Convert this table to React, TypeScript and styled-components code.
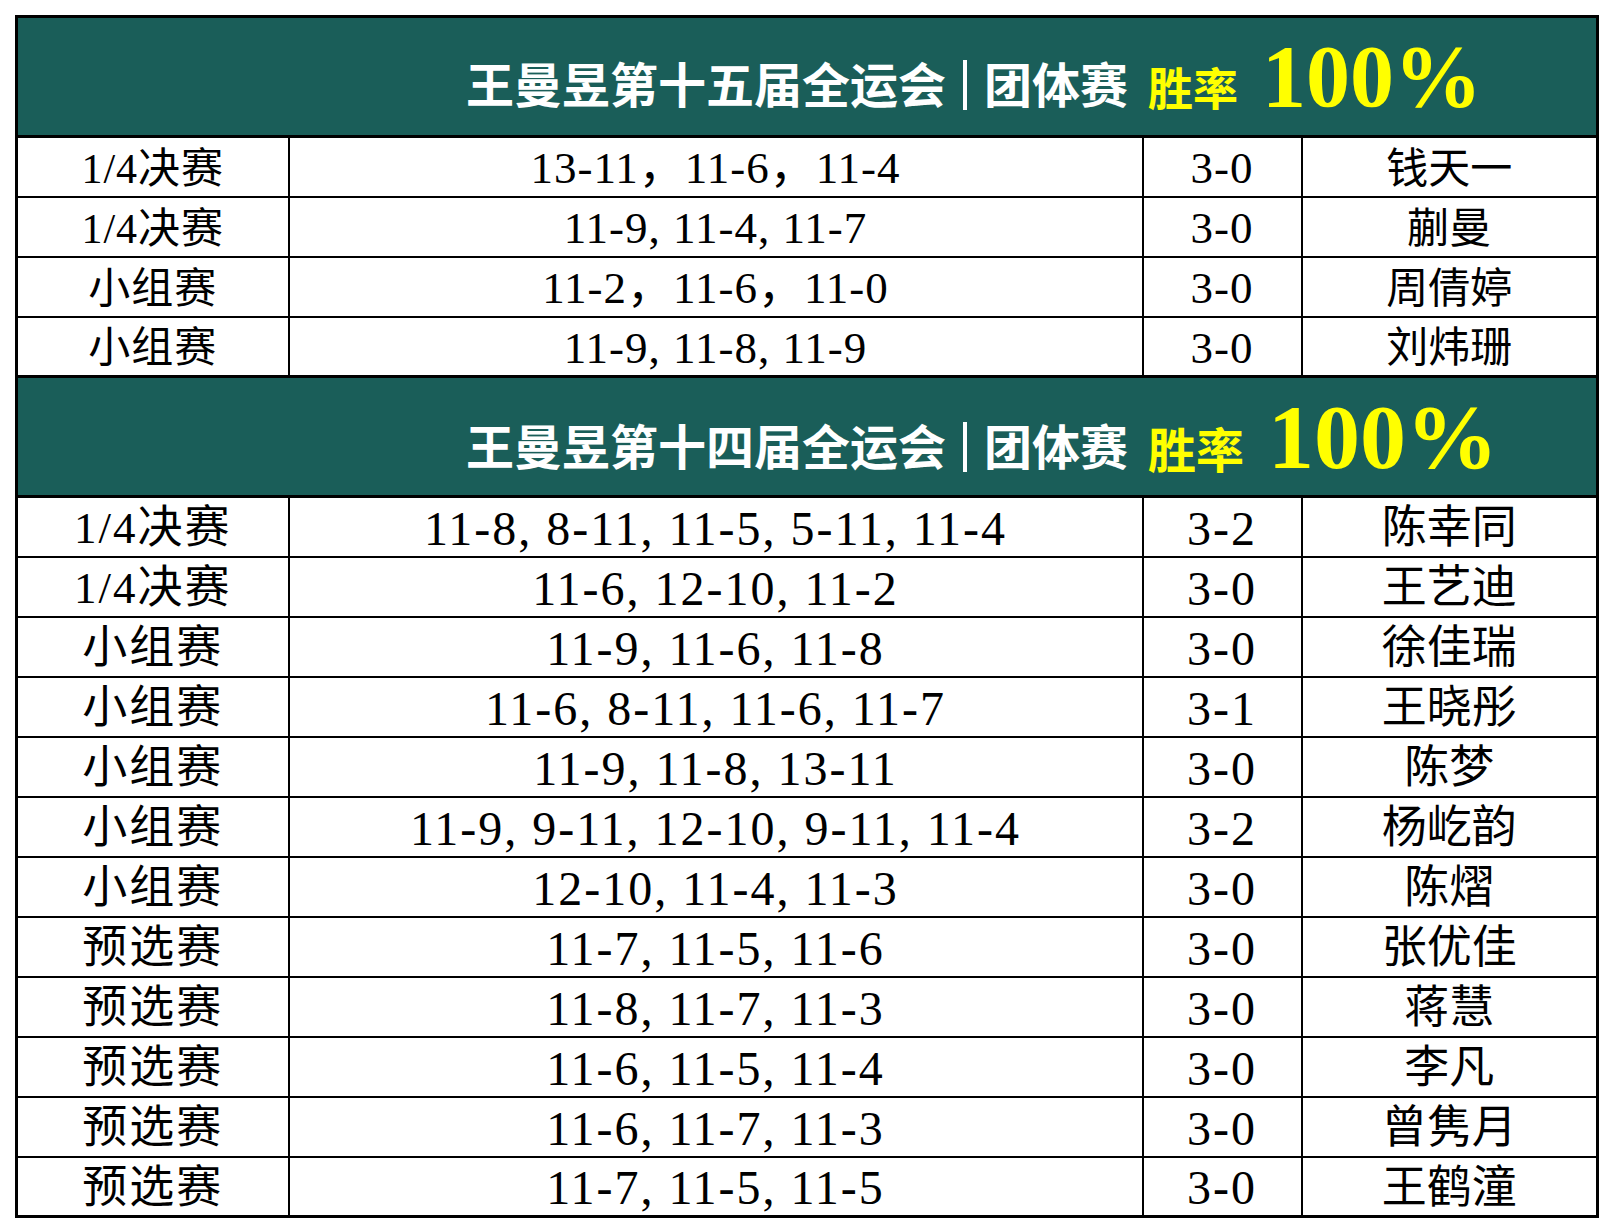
import React from "react";
import styled, { createGlobalStyle } from "styled-components";

const GlobalStyle = createGlobalStyle`
  html, body { margin: 0; padding: 0; background: #ffffff; }
  body { padding: 15px 0 0 15px; }
`;

const Table = styled.table`
  border-collapse: collapse;
  table-layout: fixed;
  width: 1581px;
  border: 3px solid #000;
  font-family: "Liberation Serif", "Noto Sans CJK SC", serif;
  color: #000;
`;

const HeaderRow = styled.tr`
  height: 120px;
`;

const HeaderCell = styled.td`
  background: #1a5e59;
  border: 3px solid #000;
  padding: 0;
`;

const HeaderLine = styled.div<{ $shift: number }>`
  display: flex;
  align-items: baseline;
  padding-left: 448px;
  padding-top: ${(p) => p.$shift}px;
`;

const Title = styled.span`
  font-family: "Noto Sans CJK SC", "Noto Sans", sans-serif;
  font-weight: 700;
  font-size: 48px;
  line-height: 1;
  color: #ffffff;
  white-space: pre;
  position: relative;
  top: -3px;
`;

const Bar = styled.span`
  display: inline-block;
  width: 4px;
  height: 50px;
  margin: 0 17px 0 17px;
  background: #ffffff;
  transform: translateY(4px);
`;

const RateLabel = styled.span<{ $size: number }>`
  font-family: "Noto Sans CJK SC", "Noto Sans", sans-serif;
  font-weight: 700;
  font-size: ${(p) => p.$size}px;
  line-height: 1;
  color: #ffff00;
  margin-left: 20px;
`;

const RateValue = styled.span<{ $size: number }>`
  font-family: "Liberation Serif", serif;
  font-weight: 700;
  font-size: ${(p) => p.$size}px;
  line-height: 1;
  color: #ffff00;
  margin-left: 24px;
`;

const Row = styled.tr`
  height: 60px;
`;

const Cell = styled.td<{ $size: number; $track: number }>`
  border: 2px solid #000;
  padding: 4px 0 0 0;
  text-align: center;
  vertical-align: middle;
  font-size: ${(p) => p.$size}px;
  letter-spacing: ${(p) => p.$track}px;
  line-height: 1;
  white-space: nowrap;
  overflow: hidden;
`;

type Match = [string, string, string, string];

const games15: Match[] = [
  ["1/4决赛", "13-11，11-6，11-4", "3-0", "钱天一"],
  ["1/4决赛", "11-9, 11-4, 11-7", "3-0", "蒯曼"],
  ["小组赛", "11-2，11-6，11-0", "3-0", "周倩婷"],
  ["小组赛", "11-9, 11-8, 11-9", "3-0", "刘炜珊"],
];

const games14: Match[] = [
  ["1/4决赛", "11-8, 8-11, 11-5, 5-11, 11-4", "3-2", "陈幸同"],
  ["1/4决赛", "11-6, 12-10, 11-2", "3-0", "王艺迪"],
  ["小组赛", "11-9, 11-6, 11-8", "3-0", "徐佳瑞"],
  ["小组赛", "11-6, 8-11, 11-6, 11-7", "3-1", "王晓彤"],
  ["小组赛", "11-9, 11-8, 13-11", "3-0", "陈梦"],
  ["小组赛", "11-9, 9-11, 12-10, 9-11, 11-4", "3-2", "杨屹韵"],
  ["小组赛", "12-10, 11-4, 11-3", "3-0", "陈熠"],
  ["预选赛", "11-7, 11-5, 11-6", "3-0", "张优佳"],
  ["预选赛", "11-8, 11-7, 11-3", "3-0", "蒋慧"],
  ["预选赛", "11-6, 11-5, 11-4", "3-0", "李凡"],
  ["预选赛", "11-6, 11-7, 11-3", "3-0", "曾隽月"],
  ["预选赛", "11-7, 11-5, 11-5", "3-0", "王鹤潼"],
];

function Header({
  edition,
  labelSize,
  valueSize,
  shift,
}: {
  edition: string;
  labelSize: number;
  valueSize: number;
  shift: number;
}) {
  return (
    <HeaderRow>
      <HeaderCell colSpan={4}>
        <HeaderLine $shift={shift}>
          <Title>{`王曼昱第${edition}届全运会`}</Title>
          <Bar />
          <Title>团体赛</Title>
          <RateLabel $size={labelSize}>胜率</RateLabel>
          <RateValue $size={valueSize}>100%</RateValue>
        </HeaderLine>
      </HeaderCell>
    </HeaderRow>
  );
}

function Rows({
  data,
  cjk,
  num,
  track,
}: {
  data: Match[];
  cjk: number;
  num: number;
  track: number;
}) {
  return (
    <>
      {data.map((m, i) => (
        <Row key={i}>
          <Cell $size={cjk} $track={track}>{m[0]}</Cell>
          <Cell $size={num} $track={track}>{m[1]}</Cell>
          <Cell $size={num} $track={track}>{m[2]}</Cell>
          <Cell $size={cjk} $track={0}>{m[3]}</Cell>
        </Row>
      ))}
    </>
  );
}

export default function App() {
  return (
    <>
      <GlobalStyle />
      <Table>
        <colgroup>
          <col style={{ width: 272 }} />
          <col style={{ width: 854 }} />
          <col style={{ width: 159 }} />
          <col style={{ width: 296 }} />
        </colgroup>
        <tbody>
          <Header edition="十五" labelSize={45} valueSize={88} shift={-1} />
          <Rows data={games15} cjk={42} num={45} track={1} />
          <Header edition="十四" labelSize={48} valueSize={92} shift={1} />
          <Rows data={games14} cjk={45} num={48} track={2} />
        </tbody>
      </Table>
    </>
  );
}
